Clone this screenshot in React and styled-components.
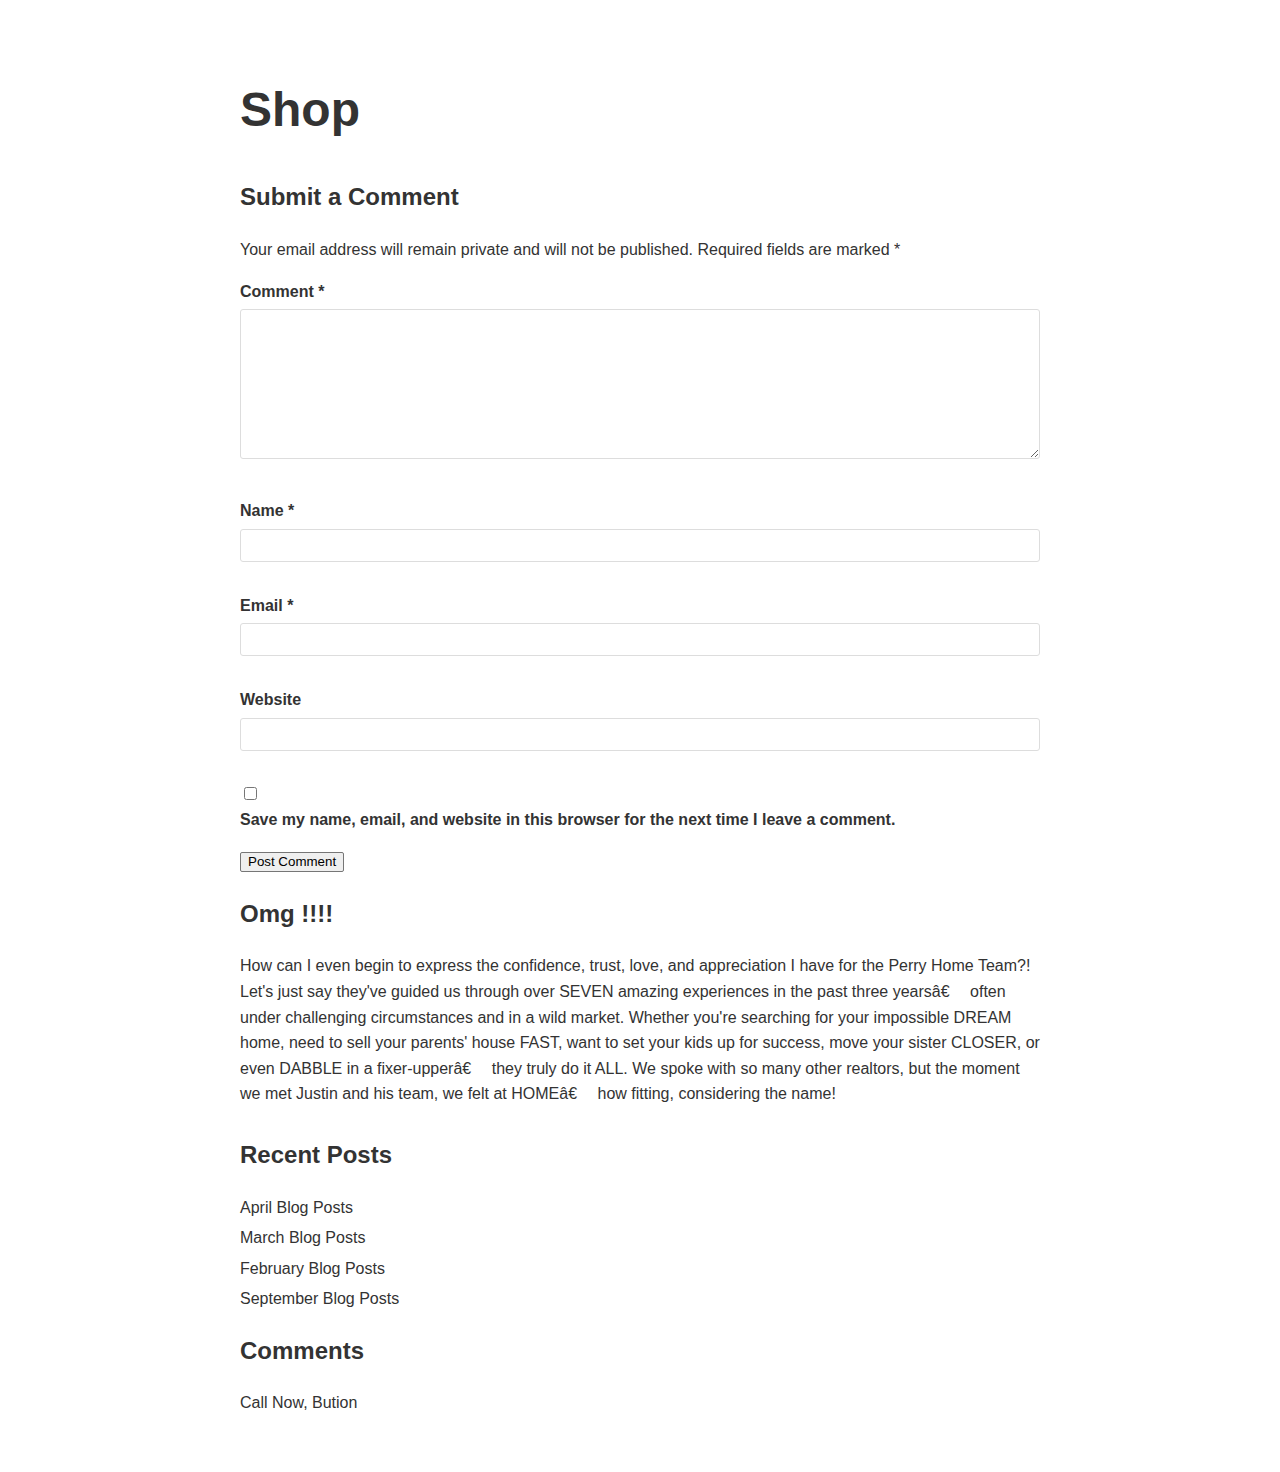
import React from "react";
import styled, { createGlobalStyle } from "styled-components";

const Global = createGlobalStyle`
  html, body { margin: 0; padding: 0; background: #fff; }
  body {
    font-family: "Liberation Sans", Arial, Helvetica, sans-serif;
    font-size: 16px;
    color: #333;
  }
  * { box-sizing: border-box; }
`;

const Page = styled.main`
  width: 800px;
  margin: 0 auto;
  padding: 79px 0 40px;
`;

const Title = styled.h1`
  margin: 0;
  font-size: 48px;
  line-height: 62px;
  font-weight: 700;
  color: #333;
`;

const Heading = styled.h3`
  margin: ${(p) => p.$mt || 0}px 0 0;
  font-size: 24px;
  line-height: 28.8px;
  font-weight: 700;
  color: #333;
`;

const Text = styled.p`
  margin: ${(p) => p.$mt || 0}px 0 0;
  font-size: 16px;
  line-height: 25.6px;
  color: #333;
`;

const Form = styled.form`
  display: flex;
  flex-direction: column;
`;

const Field = styled.div`
  display: flex;
  flex-direction: column;
  margin-top: ${(p) => p.$mt || 0}px;
`;

const Label = styled.label`
  font-weight: 700;
  font-size: 16px;
  line-height: 25.6px;
  margin-top: ${(p) => p.$mt ?? 0}px;
  margin-bottom: ${(p) => p.$mb ?? 4.4}px;
`;

const TextArea = styled.textarea`
  width: 800px;
  height: 150px;
  border: 1px solid #ddd;
  border-radius: 3px;
  padding: 8px;
  font-family: inherit;
  font-size: 16px;
  background: #fff;
`;

const Input = styled.input`
  width: 800px;
  height: 33px;
  border: 1px solid #ddd;
  border-radius: 3px;
  padding: 4px 8px;
  font-family: inherit;
  font-size: 16px;
  background: #fff;
`;

const Check = styled.input`
  margin: 3px 3px 3px 4px;
  width: 13px;
  height: 13px;
`;

const CheckRow = styled.div`
  display: flex;
  flex-direction: column;
  align-items: flex-start;
  margin-top: 33px;
`;

const SubmitRow = styled.div`
  margin-top: 19px;
  display: flex;
`;

const Button = styled.button`
  font-family: "Liberation Sans", Arial, sans-serif;
  font-size: 13.33px;
  height: 20px;
  padding: 1px 7px;
  color: #000;
  background: #efefef;
  border: 1px solid #767676;
  border-radius: 2px;
  line-height: 16px;
`;

const List = styled.ul`
  list-style: none;
  margin: 23px 0 0;
  padding: 0;
`;

const Item = styled.li`
  font-size: 16px;
  line-height: 30.4px;
  color: #333;
`;

const posts = [
  "April Blog Posts",
  "March Blog Posts",
  "February Blog Posts",
  "September Blog Posts",
];

const GAP = "\u2003";

export default function App() {
  return (
    <>
      <Global />
      <Page>
        <Title>Shop</Title>
        <Heading $mt={42}>Submit a Comment</Heading>
        <Text $mt={25}>
          Your email address will remain private and will not be published. Required fields are marked *
        </Text>
        <Form onSubmit={(e) => e.preventDefault()}>
          <Field $mt={17}>
            <Label htmlFor="comment">Comment *</Label>
            <TextArea id="comment" />
          </Field>
          <Field $mt={39}>
            <Label htmlFor="name" $mb={5.4}>Name *</Label>
            <Input id="name" type="text" />
          </Field>
          <Field $mt={31}>
            <Label htmlFor="email">Email *</Label>
            <Input id="email" type="email" />
          </Field>
          <Field $mt={31}>
            <Label htmlFor="website" $mb={5}>Website</Label>
            <Input id="website" type="url" />
          </Field>
          <CheckRow>
            <Check type="checkbox" id="save" />
            <Label htmlFor="save" $mt={4} $mb={0}>
              Save my name, email, and website in this browser for the next time I leave a comment.
            </Label>
          </CheckRow>
          <SubmitRow>
            <Button type="submit">Post Comment</Button>
          </SubmitRow>
        </Form>
        <Heading $mt={28}>Omg !!!!</Heading>
        <Text $mt={25}>
          How can I even begin to express the confidence, trust, love, and appreciation I have for the Perry Home Team?! Let's just say they've guided us through over SEVEN amazing experiences in the past three yearsâ€{GAP} often under challenging circumstances and in a wild market. Whether you're searching for your impossible DREAM home, need to sell your parents' house FAST, want to set your kids up for success, move your sister CLOSER, or even DABBLE in a fixer-upperâ€{GAP} they truly do it ALL. We spoke with so many other realtors, but the moment we met Justin and his team, we felt at HOMEâ€{GAP} how fitting, considering the name!
        </Text>
        <Heading $mt={34}>Recent Posts</Heading>
        <List>
          {posts.map((p) => (
            <Item key={p}>{p}</Item>
          ))}
        </List>
        <Heading $mt={23}>Comments</Heading>
        <Text $mt={24}>Call Now, Bution</Text>
      </Page>
    </>
  );
}
